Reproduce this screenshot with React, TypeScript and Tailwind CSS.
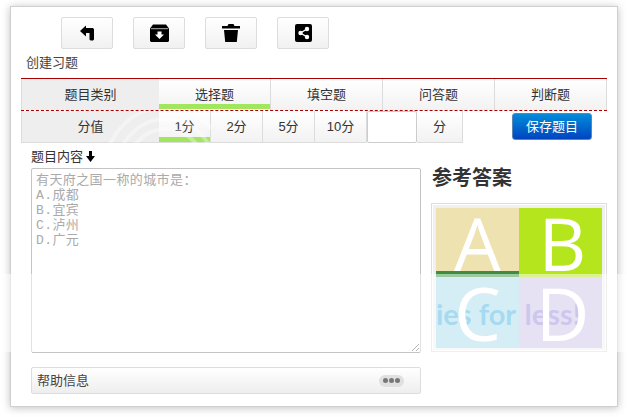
const types = ["选择题", "填空题", "问答题", "判断题"];
const scores = ["1分", "2分", "5分", "10分"];
const cell =
  "flex h-full items-center justify-center border-r border-[#dcdcdc] bg-gradient-to-b from-white to-[#f2f2f2] text-[13px] text-[#333]";

function ToolButton({ children }: { children: React.ReactNode }) {
  return (
    <button className="flex h-8 w-[52px] items-center justify-center rounded-[2px] border border-[#ddd] bg-gradient-to-b from-white to-[#f1f1f1]">
      {children}
    </button>
  );
}

export default function App() {
  return (
    <div className="relative h-[417px] w-[627px] overflow-hidden bg-white pt-[6px] pl-[10px] font-['Liberation_Sans','Noto_Sans_CJK_SC',sans-serif]">
      <div className="h-[401px] w-[608px] border border-[#cfcfcf] bg-white pt-[10px] pl-[10px] shadow-[0_1px_8px_rgba(0,0,0,0.25)]">
        <div className="ml-10 flex gap-5">
          <ToolButton>
            <svg viewBox="0 0 15 16" className="h-4 w-[15px] fill-black">
              <path d="M0 6 6 .5V3H13L14 4.2V14.5L13 15.5H10.5L9.5 14.5V8H6V11.5Z" />
            </svg>
          </ToolButton>
          <ToolButton>
            <svg viewBox="0 0 19 18" className="h-[18px] w-[19px]">
              <path d="M3 .5H16L19 4.5V17L18 18H1L0 17V4.5Z" fill="#000" />
              <path d="M1 4.7H18" stroke="#fff" strokeWidth=".7" />
              <path d="M7.5 7.5H11.5V10.5H14L9.5 15 5 10.5H7.5Z" fill="#fff" />
            </svg>
          </ToolButton>
          <ToolButton>
            <svg viewBox="0 0 18 18" className="h-[18px] w-[18px] fill-black">
              <path d="M6.5 0H11.5L12.5 2H18V4.5H0V2H5.5ZM2 6H16L14.8 18H3.2Z" />
            </svg>
          </ToolButton>
          <ToolButton>
            <svg viewBox="0 0 17 18" className="h-[18px] w-[17px]">
              <rect width="17" height="18" rx="2" fill="#000" />
              <path d="M12 5 5.5 9l6.5 4" fill="none" stroke="#fff" strokeWidth="1.4" />
              <circle cx="12" cy="5" r="2.2" fill="#fff" />
              <circle cx="5.5" cy="9" r="2.2" fill="#fff" />
              <circle cx="12" cy="13" r="2.2" fill="#fff" />
            </svg>
          </ToolButton>
        </div>

        <p className="mt-[6px] ml-[5px] text-[13px] leading-[16px] text-[#444]">创建习题</p>

        <div className="mt-[7px] w-[586px]">
          <div className="flex h-[32px] border-t border-[#a80000]">
            <div className="flex w-[138px] items-center justify-center border-l border-[#dcdcdc] bg-[#eeeeee] text-[13px] text-[#333]">题目类别</div>
            {types.map((t, i) => (
              <div key={t} className={`relative flex-1 ${cell}`}>
                {t}
                {i === 0 && <span className="absolute right-0 bottom-[1px] left-0 h-[5px] bg-[#a2e55e]" />}
              </div>
            ))}
          </div>
          <div className="h-0 border-t border-dashed border-[#a80000]" />
          <div className="relative flex h-[32px] items-start">
            <div className="flex h-full w-[138px] items-center justify-center border-b border-l border-[#dcdcdc] bg-[#eeeeee] text-[13px] text-[#333]">分值</div>
            {scores.map((s, i) => (
              <div key={s} className={`relative w-[52px] border-b ${cell}`}>
                {s}
                {i === 0 && <span className="absolute right-0 bottom-0 left-0 h-[5px] bg-[#a2e55e]" />}
              </div>
            ))}
            <div className="h-full w-[50px] rounded-[2px] border border-[#ccc] bg-white" />
            <div className={`w-[46px] border-b ${cell}`}>分</div>
            <button className="mt-[2px] ml-[49px] flex h-[27px] w-[80px] items-center justify-center rounded-[3px] border border-[#5b86b8] bg-gradient-to-b from-[#0a8bd8] to-[#0044c0] text-[13px] text-white">
              保存题目
            </button>
            {/* watermark swirl */}
            <svg className="pointer-events-none absolute top-0 left-[60px] h-[32px] w-[130px]" viewBox="0 0 130 32" fill="none" stroke="#fff" strokeOpacity=".35" strokeWidth="4">
              <circle cx="85" cy="56" r="38" />
              <circle cx="85" cy="56" r="48" />
              <circle cx="85" cy="56" r="60" />
            </svg>
          </div>
        </div>

        <div className="mt-[4px] flex">
          <div className="ml-[10px] w-[390px]">
            <div className="flex h-[19px] items-center text-[13px] text-[#333]">
              题目内容
              <svg viewBox="0 0 9 11" className="ml-[3px] h-[11px] w-[9px] fill-black">
                <path d="M3 0H6V5H9L4.5 11 0 5H3Z" />
              </svg>
            </div>
            <textarea
              readOnly
              className="mt-[2px] block h-[185px] w-[390px] rounded-[2px] border border-[#c4c4c4] bg-white px-[4px] py-[4px] font-['Liberation_Mono','Noto_Sans_CJK_SC',monospace] text-[13px] leading-[15px] tracking-[0.4px] text-[#aaa] outline-none"
              value={"有天府之国一称的城市是：\nA.成都\nB.宜宾\nC.泸州\nD.广元"}
            />
            <div className="mt-[14px] flex h-[27px] items-center justify-between rounded-[2px] border border-[#ddd] bg-gradient-to-b from-white to-[#eeeeee] pr-[16px] pl-[5px] text-[13px] text-[#444]">
              帮助信息
              <span className="flex h-[12px] w-[25px] items-center justify-center gap-[1px] rounded-full bg-[#e0e0e0]">
                <i className="h-[5px] w-[5px] rounded-full bg-[#777]" />
                <i className="h-[5px] w-[5px] rounded-full bg-[#777]" />
                <i className="h-[5px] w-[5px] rounded-full bg-[#777]" />
              </span>
            </div>
          </div>

          <div className="ml-[10px] w-[176px]">
            <h2 className="mt-[17px] ml-[1px] h-[28px] text-[20px] leading-[28px] font-bold text-[#333]">参考答案</h2>
            <div className="mt-[11px] h-[149px] w-[176px] border border-[#ddd] bg-[#f0f0f0] p-[4px] shadow-[inset_0_0_0_1px_#fff]">
              <div className="relative grid h-[140px] grid-cols-2 grid-rows-[69px_71px] font-['Open_Sans',sans-serif] text-[74px] leading-none text-white">
                <div className="flex items-center justify-center border-b-[6px] border-[#3a9040] bg-[#eee2b0]">
                  <span className="relative z-10 mt-[6px]">A</span>
                </div>
                <div className="flex items-center justify-center bg-[#b5e61d]">
                  <span className="relative z-10 ml-[4px]">B</span>
                </div>
                <div className="flex items-center justify-center bg-[#abdded]">
                  <span className="relative z-10">C</span>
                </div>
                <div className="flex items-center justify-center bg-[#cdc3e7]">
                  <span className="relative z-10 ml-[4px]">D</span>
                </div>
                <span className="absolute top-[91px] left-0 font-['Lato',sans-serif] text-[29px] leading-[30px] font-bold whitespace-nowrap text-[#4db5e0]">
                  ies for <span className="ml-[2px] text-[#9b8fdc]">less!</span>
                </span>
              </div>
            </div>
          </div>
        </div>
      </div>
      {/* watermark band across the photo */}
      <div className="pointer-events-none absolute top-[274px] left-0 z-20 h-[78px] w-full bg-white/50" />
    </div>
  );
}
